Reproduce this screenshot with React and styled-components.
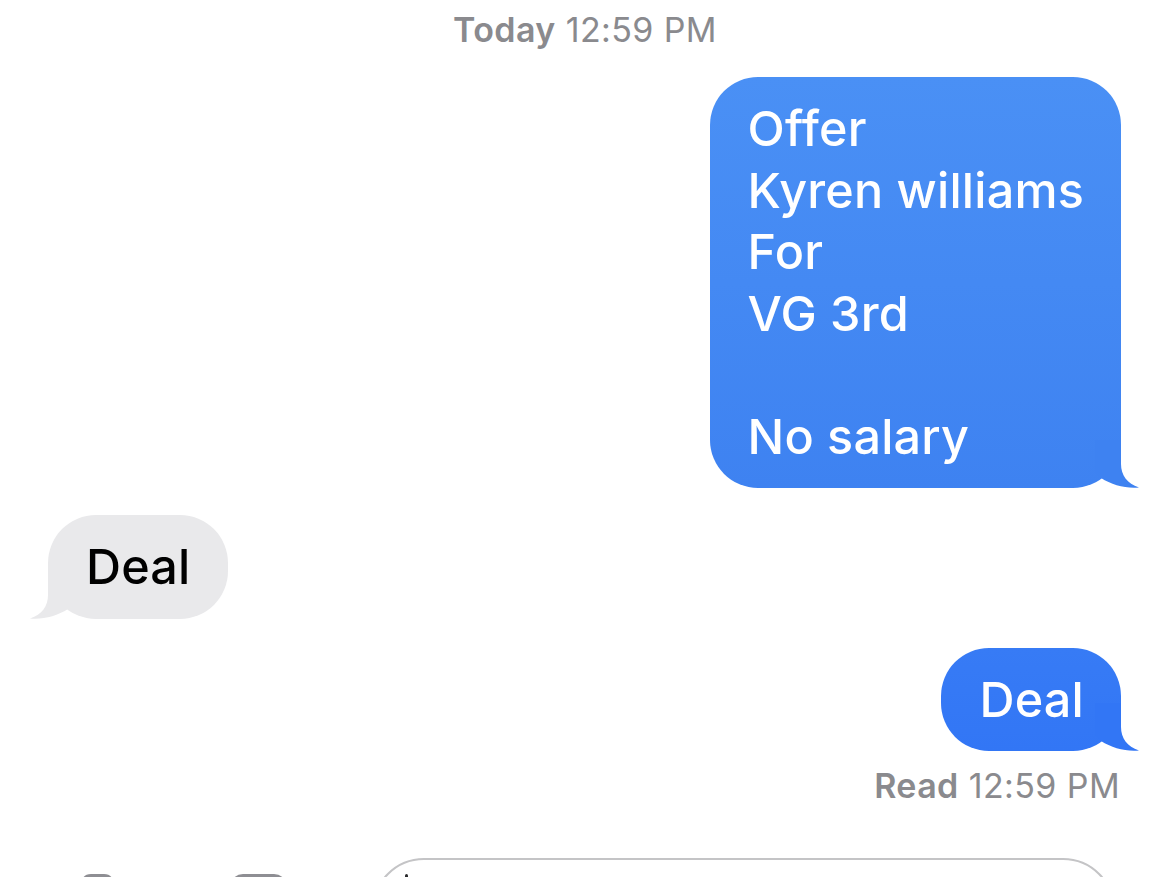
import React from "react";
import styled, { createGlobalStyle } from "styled-components";

const Global = createGlobalStyle`
  html, body {
    margin: 0;
    padding: 0;
    background: #ffffff;
    overflow: hidden;
  }
  body {
    font-family: Inter, "Noto Sans", "Liberation Sans", sans-serif;
    -webkit-font-smoothing: antialiased;
  }
`;

const Screen = styled.div`
  width: 1170px;
  height: 877px;
  overflow: hidden;
  display: flex;
  flex-direction: column;
  background: #fff;
  padding-top: 10px;
  box-sizing: border-box;
`;

const Stamp = styled.div`
  text-align: ${(p) => p.$align || "center"};
  font-size: 34px;
  line-height: 40px;
  color: #8a8a8e;
  padding: ${(p) => p.$pad || "0"};
  letter-spacing: 0.4px;
`;

const Strong = styled.span`
  font-weight: 600;
`;

const Row = styled.div`
  display: flex;
  justify-content: ${(p) => (p.$sent ? "flex-end" : "flex-start")};
  padding: 0 49px 0 48px;
  margin-top: ${(p) => p.$gap}px;
`;

const Bubble = styled.div`
  position: relative;
  background: ${(p) => p.$bg};
  color: ${(p) => (p.$sent ? "#ffffff" : "#000000")};
  border-radius: 48px;
  padding: 21px 37px 21px 38px;
  font-size: 48.5px;
  font-weight: 500;
  line-height: 61.5px;
  white-space: pre-line;
  letter-spacing: 0.2px;
`;

const Tail = styled.svg`
  position: absolute;
  bottom: 0;
  width: 45px;
  height: 48px;
  ${(p) =>
    p.$sent
      ? "right: -19px;"
      : "left: -19px; transform: scaleX(-1);"}
`;

const BubbleTail = ({ sent, color }) => (
  <Tail $sent={sent} viewBox="0 0 45 48">
    <path
      d="M0,0 H26 V24 C26,35 32,43.5 44,47.5 C31,48.8 17,45 6,38 L0,32 Z"
      fill={color}
    />
  </Tail>
);

const BottomBar = styled.div`
  margin-top: 52px;
  display: flex;
  align-items: flex-start;
  padding-left: 67px;
  flex: 1;
`;

const IconSlot = styled.div`
  width: ${(p) => p.$w}px;
  margin-top: 16px;
  margin-right: ${(p) => p.$mr}px;
  flex: none;
`;

const AppTile = styled.div`
  width: 57px;
  height: 44px;
  border-radius: 13px;
  background: #8e8e93;
  margin-top: 16px;
  margin-right: 85px;
  flex: none;
`;

const Input = styled.div`
  position: relative;
  width: 743px;
  height: 110px;
  border: 2.5px solid #c4c4c6;
  border-radius: 52px;
  box-sizing: border-box;
  flex: none;
`;

const Caret = styled.div`
  position: absolute;
  left: 31px;
  top: 14px;
  width: 3px;
  height: 40px;
  border-radius: 2px;
  background: #2a2a2c;
`;

export default function App() {
  return (
    <>
      <Global />
      <Screen>
        <Stamp>
          <Strong>Today</Strong> 12:59 PM
        </Stamp>

        <Row $sent $gap={27}>
          <Bubble $sent $bg="linear-gradient(180deg, #4a90f5 0%, #3e82f1 100%)">
            {"Offer\nKyren williams\nFor\nVG 3rd\n\nNo salary"}
            <BubbleTail sent color="#3e82f1" />
          </Bubble>
        </Row>

        <Row $gap={27}>
          <Bubble $bg="#e9e9eb">
            Deal
            <BubbleTail color="#e9e9eb" />
          </Bubble>
        </Row>

        <Row $sent $gap={29}>
          <Bubble $sent $bg="linear-gradient(180deg, #377bf5 0%, #3276f5 100%)">
            Deal
            <BubbleTail sent color="#3276f5" />
          </Bubble>
        </Row>

        <Stamp $align="right" $pad="15px 50px 0 0">
          <Strong>Read</Strong> 12:59 PM
        </Stamp>

        <BottomBar>
          <IconSlot $w={60} $mr={103}>
            <svg width="60" height="46" viewBox="0 0 60 46">
              <path
                d="M15,7 C16,2 19,0 24,0 H37 C42,0 45,2 46,7 H52 C56.5,7 60,10.5 60,15 V38 C60,42.5 56.5,46 52,46 H8 C3.5,46 0,42.5 0,38 V15 C0,10.5 3.5,7 8,7 Z"
                fill="#8e8e93"
              />
            </svg>
          </IconSlot>
          <AppTile />
          <Input>
            <Caret />
          </Input>
        </BottomBar>
      </Screen>
    </>
  );
}
